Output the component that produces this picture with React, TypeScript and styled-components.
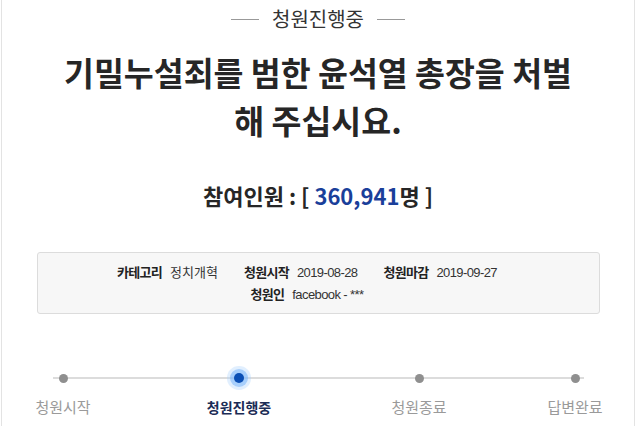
import styled, { createGlobalStyle } from 'styled-components';

const GlobalStyle = createGlobalStyle`
  html, body {
    margin: 0;
    padding: 0;
    background: #ffffff;
  }
  body {
    font-family: "Noto Sans CJK KR", "Noto Sans", sans-serif;
  }
`;

// gap = distance to the next step's dot
const steps = [
  { label: '청원시작', active: false, gap: 176 },
  { label: '청원진행중', active: true, gap: 180 },
  { label: '청원종료', active: false, gap: 156 },
  { label: '답변완료', active: false, gap: 0 },
];

const Page = styled.div`
  box-sizing: border-box;
  width: 634px;
  height: 426px;
  margin-left: 1px;
  border-left: 1px solid #e3e3e3;
  border-right: 1px solid #e3e3e3;
  overflow: hidden;
  display: flex;
  flex-direction: column;
  align-items: center;
`;

const Status = styled.div`
  margin-top: 6px;
  display: flex;
  align-items: center;
  gap: 13px;
  font-size: 20px;
  line-height: 26px;
  color: #333;

  &::before,
  &::after {
    content: '';
    width: 28px;
    height: 1px;
    background: #999;
  }
`;

const Title = styled.h1`
  margin: 16px 0 0;
  font-size: 32.5px;
  font-weight: 700;
  line-height: 48px;
  color: #262626;
  text-align: center;
`;

const Count = styled.div`
  margin-top: 36px;
  font-size: 22px;
  font-weight: 700;
  line-height: 30px;
  color: #262626;

  strong {
    color: #1a3f9a;
    font-weight: 700;
  }
`;

const InfoBox = styled.div`
  box-sizing: border-box;
  margin-top: 42px;
  width: 563px;
  height: 62px;
  padding-right: 22px;
  background: #f7f7f7;
  border: 1px solid #dcdcdc;
  border-radius: 3px;
  display: flex;
  flex-direction: column;
  align-items: center;
  justify-content: center;
  gap: 1px;
`;

const InfoRow = styled.div`
  display: flex;
  align-items: baseline;
  gap: 26px;
  font-size: 13px;
  line-height: 20px;
  color: #333;
`;

const InfoItem = styled.span`
  display: flex;
  align-items: baseline;
  gap: 8px;

  b {
    font-weight: 700;
    color: #222;
    letter-spacing: -0.7px;
  }
`;

const Latin = styled.span`
  font-family: "Liberation Sans Narrow", "Liberation Sans", sans-serif;
  letter-spacing: -0.6px;
`;

const Timeline = styled.div`
  position: relative;
  align-self: stretch;
  margin-top: 56px;
  padding-left: 61px;
  display: flex;
`;

const Track = styled.div`
  position: absolute;
  left: 51px;
  width: 531px;
  top: 7px;
  height: 2px;
  background: #dcdcdc;
`;

const Step = styled.div<{ $active: boolean; $gap: number }>`
  position: relative;
  width: 0;
  margin-right: ${p => p.$gap}px;
  display: flex;
  flex-direction: column;
  align-items: center;
  gap: 11px;
  font-size: ${p => (p.$active ? 14 : 15)}px;
  line-height: 20px;
  white-space: nowrap;
  color: ${p => (p.$active ? '#1b2c55' : '#9a9a9a')};
  font-weight: ${p => (p.$active ? 700 : 400)};
`;

const DotSlot = styled.span`
  height: 16px;
  display: flex;
  align-items: center;
  justify-content: center;
`;

const Dot = styled.span<{ $active: boolean }>`
  display: block;
  width: ${p => (p.$active ? 10 : 9)}px;
  height: ${p => (p.$active ? 10 : 9)}px;
  border-radius: 50%;
  background: ${p => (p.$active ? '#0a4fb5' : '#8f8f8f')};
  box-shadow: ${p =>
    p.$active
      ? '0 0 0 4px rgba(120, 180, 250, 0.55), 0 0 0 7px rgba(170, 210, 252, 0.35)'
      : 'none'};
`;

export default function App() {
  return (
    <>
      <GlobalStyle />
      <Page>
        <Status>청원진행중</Status>
        <Title>
          기밀누설죄를 범한 윤석열 총장을 처벌
          <br />
          해 주십시요.
        </Title>
        <Count>
          참여인원 : [ <strong>360,941</strong>명 ]
        </Count>
        <InfoBox>
          <InfoRow>
            <InfoItem>
              <b>카테고리</b>정치개혁
            </InfoItem>
            <InfoItem>
              <b>청원시작</b>
              <Latin>2019-08-28</Latin>
            </InfoItem>
            <InfoItem>
              <b>청원마감</b>
              <Latin>2019-09-27</Latin>
            </InfoItem>
          </InfoRow>
          <InfoRow>
            <InfoItem>
              <b>청원인</b>
              <Latin>facebook - ***</Latin>
            </InfoItem>
          </InfoRow>
        </InfoBox>
        <Timeline>
          <Track />
          {steps.map(s => (
            <Step key={s.label} $active={s.active} $gap={s.gap}>
              <DotSlot>
                <Dot $active={s.active} />
              </DotSlot>
              {s.label}
            </Step>
          ))}
        </Timeline>
      </Page>
    </>
  );
}
